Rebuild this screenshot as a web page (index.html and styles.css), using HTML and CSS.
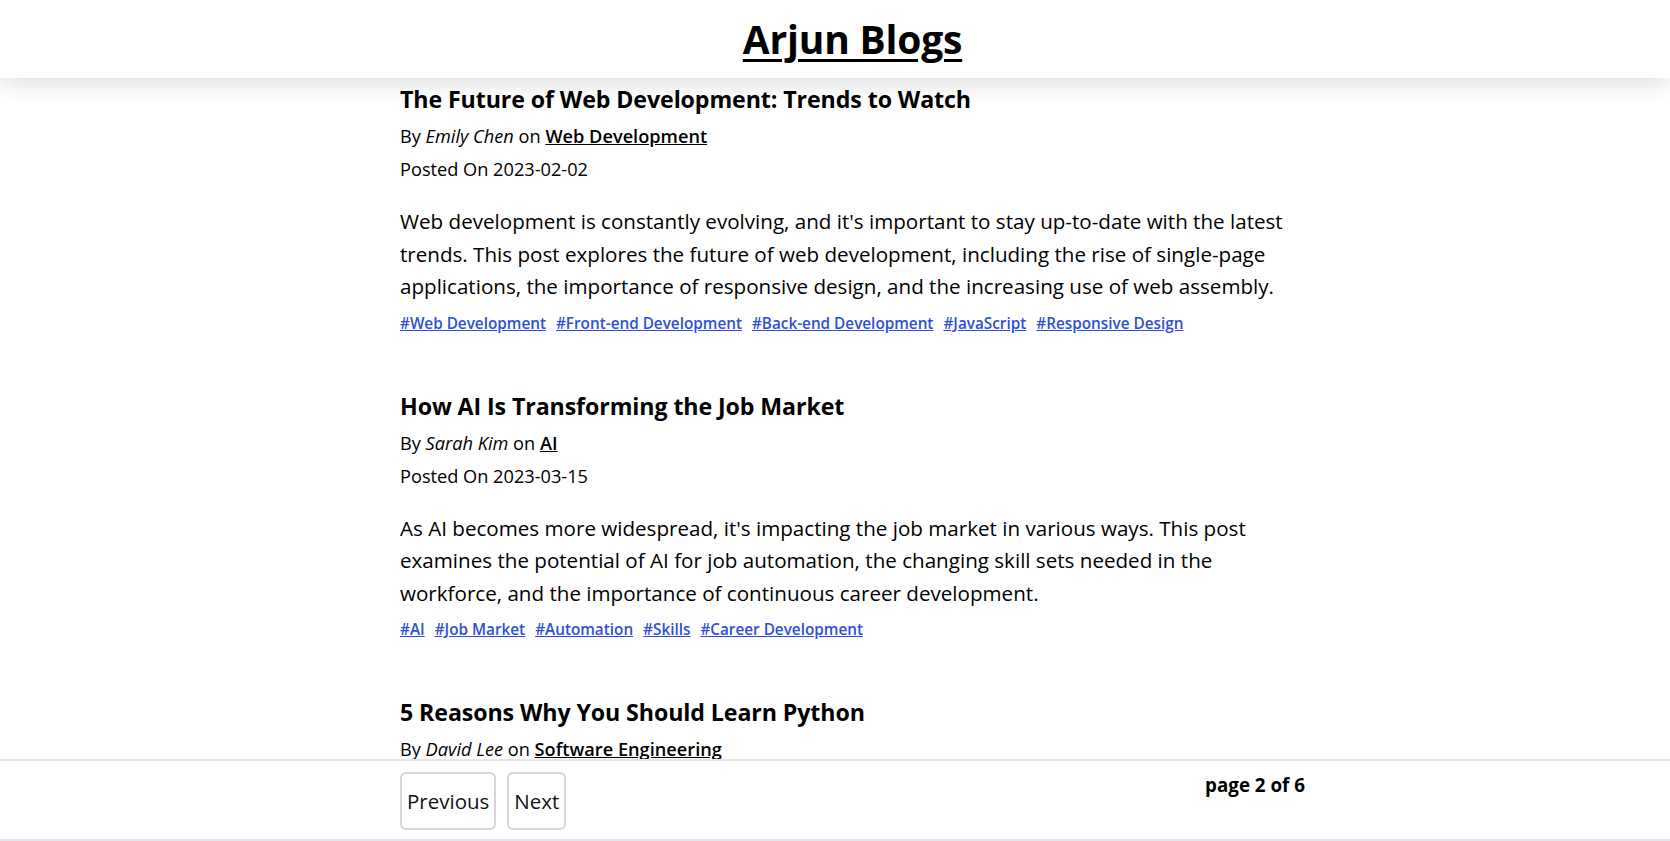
FILE: index.html
```html
<!DOCTYPE html>
<html lang="en">
<head>
<meta charset="utf-8">
<title>Arjun Blogs</title>
<link rel="stylesheet" href="styles.css">
</head>
<body>
<header class="site-header">
  <div class="container header-inner">
    <h1 class="brand"><a href="#">Arjun Blogs</a></h1>
  </div>
</header>

<main class="container posts">
  <article class="post">
    <h2 class="post-title">The Future of Web Development: Trends to Watch</h2>
    <p class="byline">By <em>Emily Chen</em> on <a class="category" href="#">Web Development</a></p>
    <p class="posted">Posted On 2023-02-02</p>
    <p class="excerpt">Web development is constantly evolving, and it's important to stay up-to-date with the latest trends. This post explores the future of web development, including the rise of single-page applications, the importance of responsive design, and the increasing use of web assembly.</p>
    <div class="tags">
      <a href="#">#Web Development</a>
      <a href="#">#Front-end Development</a>
      <a href="#">#Back-end Development</a>
      <a href="#">#JavaScript</a>
      <a href="#">#Responsive Design</a>
    </div>
  </article>

  <article class="post">
    <h2 class="post-title">How AI Is Transforming the Job Market</h2>
    <p class="byline">By <em>Sarah Kim</em> on <a class="category" href="#">AI</a></p>
    <p class="posted">Posted On 2023-03-15</p>
    <p class="excerpt">As AI becomes more widespread, it's impacting the job market in various ways. This post examines the potential of AI for job automation, the changing skill sets needed in the workforce, and the importance of continuous career development.</p>
    <div class="tags">
      <a href="#">#AI</a>
      <a href="#">#Job Market</a>
      <a href="#">#Automation</a>
      <a href="#">#Skills</a>
      <a href="#">#Career Development</a>
    </div>
  </article>

  <article class="post">
    <h2 class="post-title">5 Reasons Why You Should Learn Python</h2>
    <p class="byline">By <em>David Lee</em> on <a class="category" href="#">Software Engineering</a></p>
    <p class="posted">Posted On 2023-04-01</p>
    <p class="excerpt">Python is one of the most popular programming languages in the world. This post covers five reasons why learning Python is a great investment for your career, from its simple syntax to its huge ecosystem of libraries.</p>
    <div class="tags">
      <a href="#">#Python</a>
      <a href="#">#Programming</a>
      <a href="#">#Career</a>
    </div>
  </article>
</main>

<footer class="pager">
  <div class="container pager-inner">
    <div class="pager-buttons">
      <button class="pager-btn" type="button">Previous</button>
      <button class="pager-btn" type="button">Next</button>
    </div>
    <p class="page-count">page 2 of 6</p>
  </div>
</footer>
</body>
</html>
```

FILE: styles.css
```css
* { box-sizing: border-box; }

html, body {
  margin: 0;
  padding: 0;
  background: #ffffff;
  color: #000000;
  font-family: "Open Sans", "Noto Sans", "Liberation Sans", sans-serif;
}

.container {
  width: 905px;
  margin-left: 400px;
}

.site-header {
  position: sticky;
  top: 0;
  height: 78px;
  background: #ffffff;
  box-shadow: 0 6px 26px rgba(0, 0, 0, 0.13);
  z-index: 5;
}

.header-inner {
  text-align: center;
}

.brand {
  margin: 0;
  font-size: 39px;
  line-height: 78px;
  font-weight: 700;
  letter-spacing: -0.2px;
}

.brand a {
  color: #000000;
  text-decoration: underline;
  text-decoration-thickness: 3px;
  text-underline-offset: 5px;
}

.posts {
  padding-top: 4px;
  padding-bottom: 120px;
}

.post {
  padding-bottom: 53px;
}

.post-title {
  margin: 0 0 4px;
  font-size: 23.2px;
  line-height: 34px;
  font-weight: 700;
  letter-spacing: -0.1px;
}

.byline,
.posted {
  margin: 0;
  font-size: 18.2px;
  line-height: 33px;
}

.byline em {
  font-style: italic;
}

.category {
  color: #000000;
  font-weight: 600;
  text-decoration: underline;
}

.excerpt {
  margin: 19px 0 0;
  font-size: 20.6px;
  line-height: 32.5px;
}

.tags {
  display: flex;
  flex-wrap: wrap;
  gap: 10px;
  margin-top: 7px;
  font-size: 15.3px;
  line-height: 26px;
}

.tags a {
  color: #2f4fd8;
  font-weight: 600;
  text-decoration: underline;
}

.pager {
  position: fixed;
  left: 0;
  right: 0;
  bottom: 0;
  height: 82px;
  background: #ffffff;
  border-top: 2px solid #e6e6eb;
  border-bottom: 2px solid #e6e6eb;
  z-index: 5;
}

.pager-inner {
  display: flex;
  justify-content: space-between;
  align-items: flex-start;
  padding-top: 11px;
}

.pager-buttons {
  display: flex;
  gap: 11px;
}

.pager-btn {
  height: 58px;
  padding: 0 5px;
  background: #ffffff;
  border: 2px solid #d4d4d9;
  border-radius: 6px;
  font-family: inherit;
  font-size: 20.5px;
  color: #111111;
}

.page-count {
  margin: 1px 0 0;
  font-size: 18.8px;
  font-weight: 700;
  line-height: 24px;
}
```
